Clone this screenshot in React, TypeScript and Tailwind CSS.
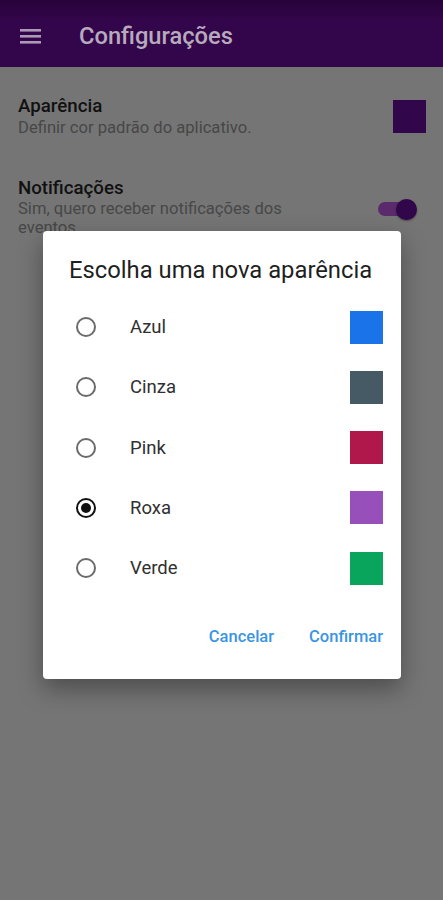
import React from "react";

const options = [
  { name: "Azul", color: "bg-[#1a73e8]", checked: false },
  { name: "Cinza", color: "bg-[#455a64]", checked: false },
  { name: "Pink", color: "bg-[#b0174b]", checked: false },
  { name: "Roxa", color: "bg-[#974fba]", checked: true },
  { name: "Verde", color: "bg-[#0aa55c]", checked: false },
];

export default function App() {
  return (
    <div
      className="relative h-[900px] w-[443px] overflow-hidden bg-[#757575]"
      style={{ fontFamily: "Roboto, 'Noto Sans', sans-serif" }}
    >
      {/* App bar */}
      <div className="flex h-[67px] items-center bg-gradient-to-b from-[#27033a] from-0% via-[#33054a] via-30% to-[#33054a] pl-[20px]">
        <svg width="22" height="18" viewBox="0 0 22 18" className="mt-[4px]">
          <rect x="0" y="2" width="21" height="2.6" fill="#aa9ab3" />
          <rect x="0" y="8" width="21" height="2.6" fill="#aa9ab3" />
          <rect x="0" y="14" width="21" height="2.6" fill="#aa9ab3" />
        </svg>
        <span className="ml-[37px] mt-[4px] text-[23.7px] font-medium leading-[28px] text-[#b7aabd]">
          Configurações
        </span>
      </div>

      {/* Settings content */}
      <div className="px-[18px] pt-[28px]">
        <div className="flex items-center justify-between">
          <div>
            <div className="text-[18.7px] font-medium leading-[22px] text-[#111]">Aparência</div>
            <div className="text-[16.6px] leading-[21px] text-[#474747]">
              Definir cor padrão do aplicativo.
            </div>
          </div>
          <div className="mr-[-1px] h-[33px] w-[33px] bg-[#32064a]" />
        </div>

        <div className="mt-[39px] flex items-center justify-between">
          <div className="w-[300px]">
            <div className="text-[18.7px] font-medium leading-[22px] text-[#111]">Notificações</div>
            <div className="text-[16.6px] leading-[19px] text-[#474747]">
              Sim, quero receber notificações dos eventos
            </div>
          </div>
          <div className="relative mr-[8px] mt-[4px] h-[20px] w-[40px]">
            <div className="absolute left-[1px] top-[3px] h-[14px] w-[34px] rounded-full bg-[#5a2a6c]" />
            <div className="absolute right-0 top-0 h-[21px] w-[21px] rounded-full bg-[#32064a] shadow-[0_1px_2px_rgba(0,0,0,0.4)]" />
          </div>
        </div>
      </div>

      {/* Dialog */}
      <div className="absolute left-[43px] top-[231px] w-[358px] rounded-[4px] bg-white shadow-[0_10px_24px_rgba(0,0,0,0.35)]">
        <div className="pl-[26px] pt-[25px] text-[23.8px] leading-[28px] text-[#1f1f1f]">
          Escolha uma nova aparência
        </div>
        <div className="mt-[13px]">
          {options.map((o) => (
            <div key={o.name} className="flex h-[60.25px] items-center pr-[18px]">
              <div className="ml-[33px] flex h-[20px] w-[20px] items-center justify-center">
                {o.checked ? (
                  <div className="flex h-[20px] w-[20px] items-center justify-center rounded-full border-2 border-[#111]">
                    <div className="h-[10px] w-[10px] rounded-full bg-[#111]" />
                  </div>
                ) : (
                  <div className="h-[20px] w-[20px] rounded-full border-2 border-[#6b6b6b]" />
                )}
              </div>
              <div className="ml-[34px] flex-1 text-[18.5px] leading-[22px] text-[#303030]">{o.name}</div>
              <div className={`h-[33px] w-[33px] ${o.color}`} />
            </div>
          ))}
        </div>
        <div className="mb-[24px] mt-[21px] flex h-[36px] items-center justify-end gap-[35px] pr-[18px]">
          <span className="text-[16.5px] font-medium text-[#3a95e3]">Cancelar</span>
          <span className="text-[16.5px] font-medium text-[#3a95e3]">Confirmar</span>
        </div>
      </div>
    </div>
  );
}
